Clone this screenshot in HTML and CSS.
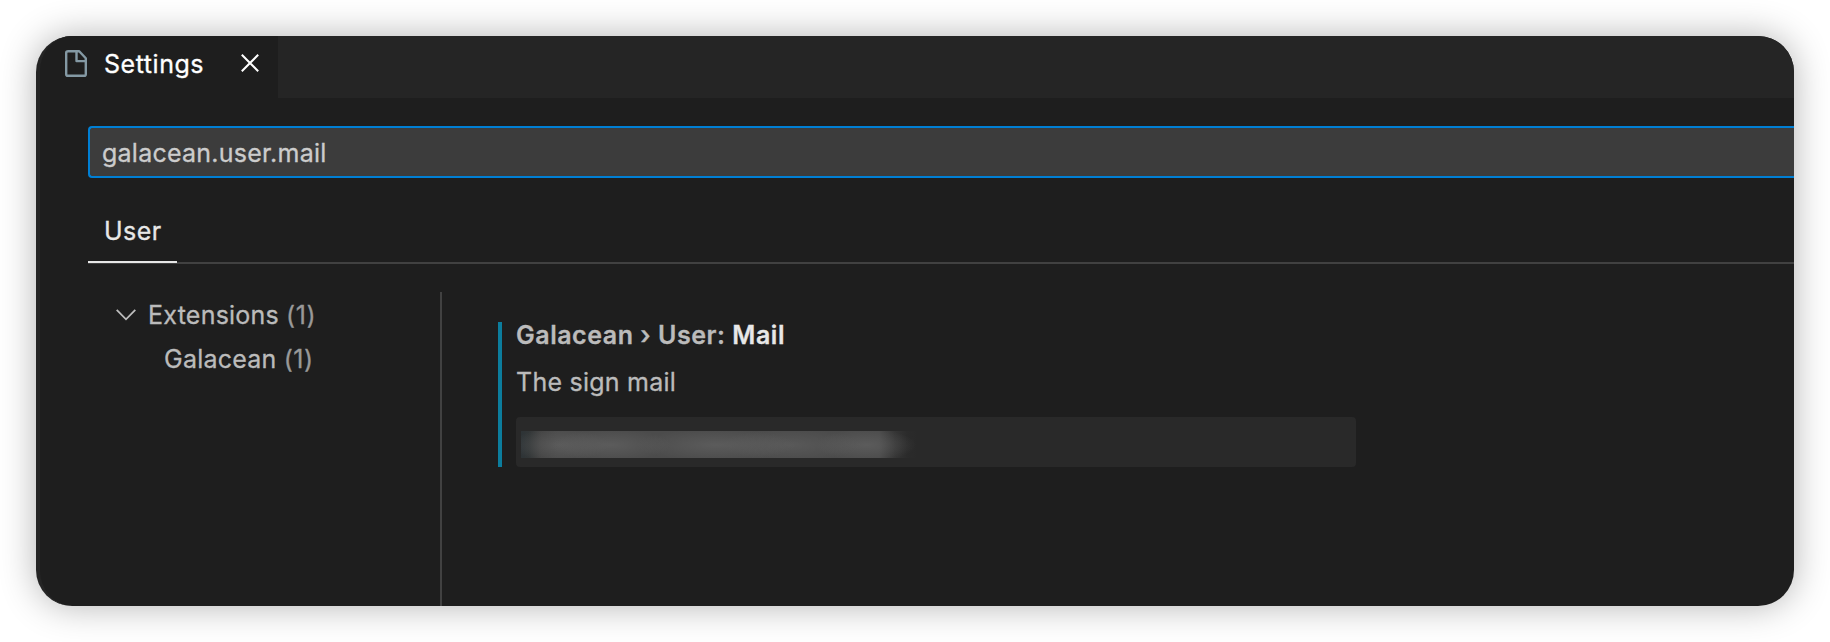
FILE: index.html
```html
<!DOCTYPE html>
<html lang="en">
<head>
<meta charset="utf-8">
<title>Settings</title>
<link rel="stylesheet" href="styles.css">
</head>
<body>
<main class="window">
  <header class="tabs">
    <div class="tab">
      <svg class="file-icon" width="24" height="28" viewBox="0 0 24 28" fill="none" stroke="#8499a4" stroke-width="2.4" stroke-linejoin="round"><path d="M3.2 1.2H14.2L20.8 8.2V24.2Q20.8 25.8 19.2 25.8H2.8Q1.2 25.8 1.2 24.2V2.8Q1.2 1.2 3.2 1.2Z"/><path d="M11.5 1.3V11.1H20.8"/></svg>
      <span class="tab-title">Settings</span>
      <svg class="close" width="18" height="18" viewBox="0 0 18 18" fill="none" stroke="#fff" stroke-width="2"><path d="M.8.8 17.2 17.2M17.2.8.8 17.2"/></svg>
    </div>
  </header>
  <div class="search"><span class="query">galacean.user.mail</span></div>
  <nav class="scopes"><span class="scope"><span class="scope-text">User</span></span></nav>
  <div class="body">
    <aside class="tree">
      <div class="row">
        <svg class="chevron" width="20" height="12" viewBox="0 0 20 12" fill="none" stroke="#bdbdbd" stroke-width="1.8"><path d="M.7.9 10 10.3 19.3.9"/></svg>
        <span class="ext">Extensions</span><span class="count">(1)</span>
      </div>
      <div class="row child"><span class="gal">Galacean</span><span class="count">(1)</span></div>
    </aside>
    <section class="content">
      <div class="setting">
        <h1 class="title"><span class="category">Galacean › User: </span><span class="name">Mail</span></h1>
        <p class="desc">The sign mail</p>
        <div class="input"><div class="redacted"><div class="smudge"></div></div></div>
      </div>
    </section>
  </div>
</main>
</body>
</html>
```
FILE: styles.css
```css
* { box-sizing: border-box; }
body {
  margin: 0;
  padding: 36px;
  height: 642px;
  overflow: hidden;
  background: #fff;
  font-family: Inter, "Liberation Sans", sans-serif;
  font-size: 25px;
  font-weight: 400;
  letter-spacing: .24px;
  -webkit-text-stroke: .3px currentColor;
  line-height: 44px;
  color: #bbb;
  white-space: nowrap;
}
.window {
  display: flex;
  flex-direction: column;
  width: 1758px;
  height: 570px;
  overflow: hidden;
  border-radius: 36px;
  border-left: 4px solid #252525;
  background: #1e1e1e;
  box-shadow: 0 0 36px rgba(0, 0, 0, .3);
}
.tabs { height: 62px; flex: none; background: #252525; }
.tab {
  display: flex;
  align-items: flex-start;
  width: 238px;
  height: 62px;
  padding-left: 25px;
  background: #1e1e1e;
  color: #fff;
}
.file-icon { flex: none; margin-top: 14px; }
.tab-title { flex: none; width: 121px; margin: 6px 0 0 15px; letter-spacing: .55px; }
.close { flex: none; margin: 18px 0 0 16px; }
.search {
  flex: none;
  height: 52px;
  margin: 28px 0 0 48px;
  padding-left: 12px;
  border: 2px solid #007fd4;
  border-right: 0;
  border-radius: 4px 0 0 4px;
  background: #3c3c3c;
  color: #ccc;
  line-height: 50px;
}
.scopes {
  display: flex;
  flex: none;
  height: 86px;
  margin-left: 48px;
  border-bottom: 2px solid #414141;
}
.scope {
  width: 89px;
  height: 85px;
  padding: 31px 0 0 16px;
  border-bottom: 2px solid #e7e7e7;
  color: #e7e7e7;
  letter-spacing: .5px;
}
.body { display: flex; flex: 1; padding-top: 28px; }
.tree { width: 402px; border-right: 2px solid #414141; }
.row { display: flex; align-items: center; height: 44px; padding-left: 76px; }
.row:first-child { margin-top: 1px; }
.chevron { margin-right: 12px; }
.child { padding-left: 124px; }
.count { margin-left: 7px; color: #999; letter-spacing: .6px; }
.content { padding: 30px 0 0 56px; }
.setting { width: 858px; height: 145px; padding-left: 14px; border-left: 4px solid #0c7d9d; }
.title { margin: 0; height: 26px; font-size: 25px; font-weight: 600; line-height: 26px; letter-spacing: .53px; }
.name { color: #e7e7e7; }
.desc { margin: 21px 0 0; height: 26px; line-height: 26px; }
.input {
  height: 50px;
  margin-top: 22px;
  padding: 14px 0 0 5px;
  border-radius: 4px;
  background: #292929;
}
.redacted { width: 398px; height: 27px; overflow: hidden; }
.smudge {
  height: 27px;
  background:
    radial-gradient(ellipse 60px 16px at 90px 14px, rgba(105, 105, 105, .55), transparent),
    radial-gradient(ellipse 80px 16px at 195px 14px, rgba(105, 105, 105, .55), transparent),
    radial-gradient(ellipse 70px 16px at 270px 14px, rgba(105, 105, 105, .45), transparent),
    radial-gradient(ellipse 50px 16px at 345px 14px, rgba(105, 105, 105, .55), transparent),
    radial-gradient(ellipse 50px 16px at 38px 14px, rgba(105, 105, 105, .5), transparent),
    linear-gradient(90deg, #2d3336 0, #323637 8px, #444 20px, #4b4b4b 36px, #4b4b4b 358px, #353535 374px, #2b2b2b 386px, #292929 396px);
}
```
